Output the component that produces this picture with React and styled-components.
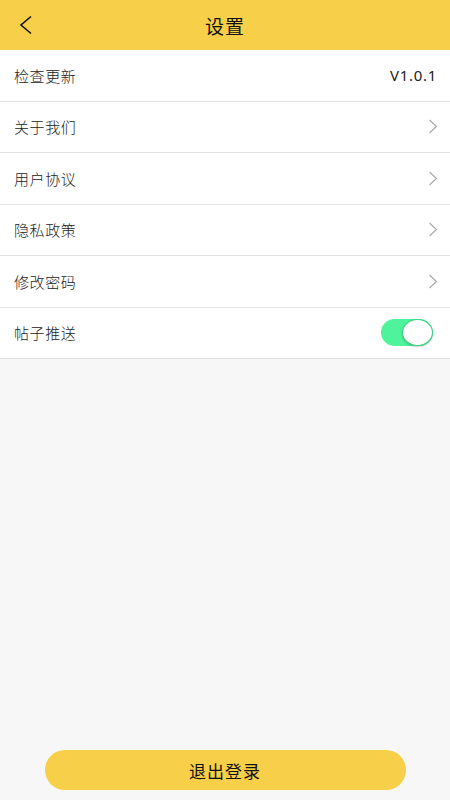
import React, { useState } from 'react';
import styled, { createGlobalStyle } from 'styled-components';

const GlobalStyle = createGlobalStyle`
  html, body {
    margin: 0;
    padding: 0;
    background-color: #f7f7f7;
    font-family: "Noto Sans CJK SC", "Noto Sans", sans-serif;
  }
`;

const Page = styled.div`
  width: 450px;
  height: 800px;
  display: flex;
  flex-direction: column;
  background-color: #f7f7f7;
  overflow: hidden;
`;

const Header = styled.div`
  height: 50px;
  flex-shrink: 0;
  background-color: #f7cf48;
  display: grid;
  grid-template-columns: 60px 1fr 60px;
  align-items: center;
`;

const BackButton = styled.div`
  display: flex;
  align-items: center;
  padding-left: 19px;
  height: 100%;
`;

const Title = styled.div`
  text-align: center;
  font-size: 19px;
  color: #111;
  letter-spacing: 1px;
`;

const List = styled.div`
  background-color: #fff;
  display: flex;
  flex-direction: column;
`;

const Row = styled.div`
  height: 50.5px;
  box-sizing: content-box;
  border-bottom: 1px solid #e2e2e2;
  display: flex;
  align-items: center;
  justify-content: space-between;
  padding: 0 12px 0 14px;
`;

const Label = styled.span`
  font-size: 15px;
  font-weight: 300;
  color: #222;
  letter-spacing: 0.6px;
`;

const Value = styled.span`
  font-family: "Noto Sans", "Liberation Sans", sans-serif;
  font-size: 15px;
  color: #222;
  letter-spacing: 0.7px;
  margin-right: 1px;
`;

const Toggle = styled.div`
  position: relative;
  width: 52px;
  height: 27px;
  border-radius: 14px;
  background-color: ${p => (p.$on ? '#4ff39c' : '#ddd')};
  margin-right: 5px;
  cursor: pointer;
`;

const Knob = styled.div`
  position: absolute;
  top: 0;
  left: ${p => (p.$on ? '21px' : '0')};
  width: 29px;
  height: 25px;
  border-radius: 50%;
  background-color: #fff;
  border: 1px solid #3dcf82;
  box-shadow: 0 1px 2px rgba(0, 0, 0, 0.2);
`;

const Spacer = styled.div`
  flex: 1;
`;

const Footer = styled.div`
  display: flex;
  justify-content: center;
  padding-bottom: 10px;
`;

const LogoutButton = styled.button`
  width: 361px;
  height: 40px;
  border: none;
  border-radius: 20px;
  background-color: #f7cf48;
  color: #111;
  font-family: "Noto Sans CJK SC", sans-serif;
  font-size: 17px;
  letter-spacing: 1px;
  cursor: pointer;
`;

const BackIcon = () => (
  <svg width="14" height="20" viewBox="0 0 14 20">
    <polyline points="12,1.5 2,10 12,18.5" fill="none" stroke="#111" strokeWidth="1.6" />
  </svg>
);

const Chevron = () => (
  <svg width="10" height="15" viewBox="0 0 10 15">
    <polyline points="1.5,1 8.5,7.5 1.5,14" fill="none" stroke="#aaa" strokeWidth="1.2" />
  </svg>
);

const links = ['关于我们', '用户协议', '隐私政策', '修改密码'];

export default function App() {
  const [push, setPush] = useState(true);

  return (
    <Page>
      <GlobalStyle />
      <Header>
        <BackButton><BackIcon /></BackButton>
        <Title>设置</Title>
        <div />
      </Header>
      <List>
        <Row>
          <Label>检查更新</Label>
          <Value>V1.0.1</Value>
        </Row>
        {links.map(text => (
          <Row key={text}>
            <Label>{text}</Label>
            <Chevron />
          </Row>
        ))}
        <Row>
          <Label>帖子推送</Label>
          <Toggle $on={push} onClick={() => setPush(!push)}>
            <Knob $on={push} />
          </Toggle>
        </Row>
      </List>
      <Spacer />
      <Footer>
        <LogoutButton>退出登录</LogoutButton>
      </Footer>
    </Page>
  );
}
